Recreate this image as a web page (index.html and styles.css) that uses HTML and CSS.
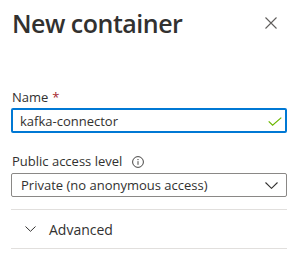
FILE: index.html
```html
<!DOCTYPE html>
<html lang="en">
<head>
    <meta charset="UTF-8">
    <title>New container</title>
    <link rel="stylesheet" href="styles.css">
</head>
<body>
    <div class="panel">
        <header class="panel-header">
            <h1>New container</h1>
            <button class="close-btn" aria-label="Close">
                <svg width="12" height="12" viewBox="0 0 12 12"><path d="M0.5 0.5 L11.5 11.5 M11.5 0.5 L0.5 11.5" stroke="#605e5c" stroke-width="1.1" fill="none"/></svg>
            </button>
        </header>

        <div class="field field-name">
            <label class="field-label">Name <span class="required">*</span></label>
            <div class="text-input is-valid">
                <span class="value">kafka-connector</span>
                <svg class="check" width="14" height="9" viewBox="0 0 14 9"><path d="M0.7 4.3 L4.6 8.2 L13.3 0.6" stroke="#6bb700" stroke-width="1.2" fill="none"/></svg>
            </div>
        </div>

        <div class="field field-access">
            <label class="field-label">Public access level
                <svg class="info" width="12" height="12" viewBox="0 0 12 12"><circle cx="6" cy="6" r="5.4" stroke="#323130" stroke-width="0.9" fill="none"/><circle cx="6" cy="3.6" r="0.65" fill="#323130"/><path d="M6 5.2 V8.8" stroke="#323130" stroke-width="0.9"/></svg>
            </label>
            <div class="dropdown">
                <span class="value">Private (no anonymous access)</span>
                <svg class="chevron" width="13" height="7" viewBox="0 0 13 7"><path d="M0.5 0.5 L6.5 6.3 L12.5 0.5" stroke="#323130" stroke-width="1.1" fill="none"/></svg>
            </div>
        </div>

        <div class="section-toggle">
            <svg class="chevron" width="11" height="6" viewBox="0 0 11 6"><path d="M0.5 0.5 L5.5 5.3 L10.5 0.5" stroke="#323130" stroke-width="1" fill="none"/></svg>
            <span>Advanced</span>
        </div>
    </div>
</body>
</html>
```

FILE: styles.css
```css
* {
    margin: 0;
    padding: 0;
    box-sizing: border-box;
}

body {
    font-family: 'Open Sans', 'Liberation Sans', sans-serif;
    background: white;
    color: #323130;
}

.panel {
    width: 300px;
    padding: 4px 13px 0 11px;
}

.panel-header {
    display: flex;
    justify-content: space-between;
    align-items: center;
    height: 36px;
}

h1 {
    font-size: 25px;
    font-weight: 600;
    line-height: 36px;
    letter-spacing: -0.5px;
    padding-left: 1px;
    padding-top: 1px;
}

.close-btn {
    border: none;
    background: none;
    width: 12px;
    height: 12px;
    margin-right: 10px;
    margin-top: 2px;
    display: flex;
}

.field-label {
    display: flex;
    align-items: center;
    font-size: 13px;
    line-height: 20px;
    margin-bottom: 2px;
    padding-left: 1px;
}

.field-name {
    margin-top: 47px;
}

.field-name .field-label {
    margin-bottom: 1px;
}

.field-access {
    margin-top: 18px;
}

.required {
    color: #a4262c;
    margin-left: 4px;
}

.info {
    margin-left: 10px;
    margin-top: 1px;
}

.text-input,
.dropdown {
    display: flex;
    align-items: center;
    justify-content: space-between;
    font-size: 13px;
    border-radius: 2px;
}

.text-input {
    height: 25px;
    border: 2px solid #0078d4;
    padding: 0 3px 0 7px;
}

.text-input .check {
    margin-top: 1px;
}

.dropdown {
    height: 24px;
    border: 1px solid #8a8886;
    padding: 0 8px 0 9px;
}

.dropdown .chevron {
    margin-top: 1px;
}

.section-toggle {
    display: flex;
    align-items: center;
    gap: 13px;
    height: 40px;
    margin-top: 12px;
    border-top: 1px solid #e1dfdd;
    border-bottom: 1px solid #e1dfdd;
    padding-left: 14px;
    font-size: 14px;
}
```
